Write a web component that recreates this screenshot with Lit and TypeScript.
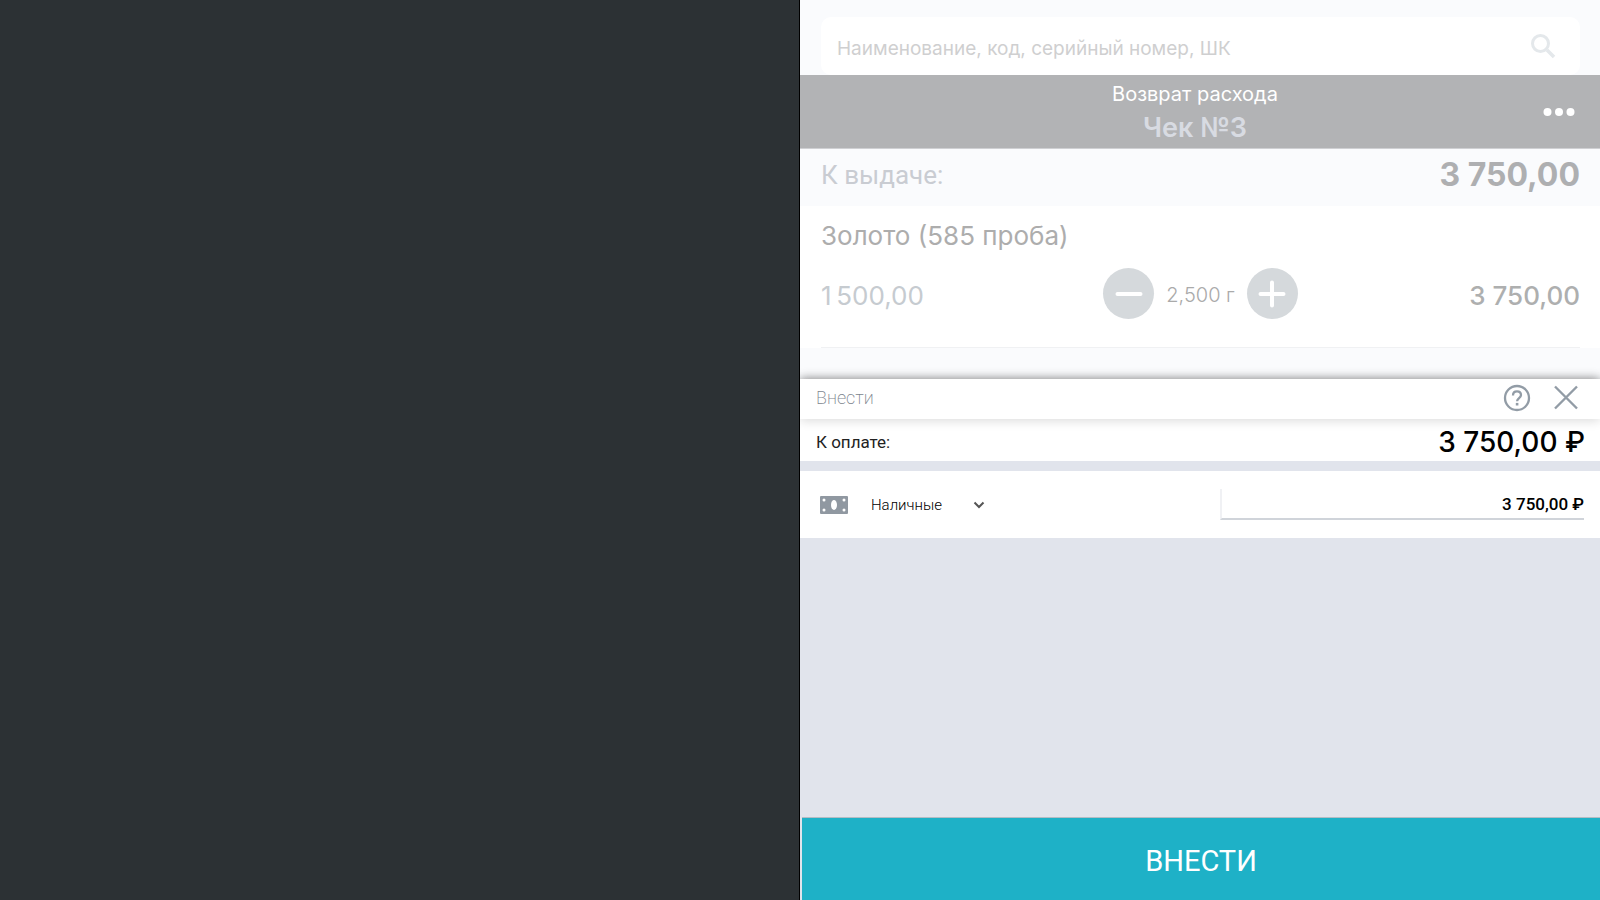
import { LitElement, html, css } from "lit";
import { customElement, state } from "lit/decorators.js";

@customElement("sale-receipt")
class SaleReceipt extends LitElement {
  static styles = css`
    :host { display: block; background: #fafbfd; font-family: Inter, "Liberation Sans", sans-serif; }
    * { box-sizing: border-box; }
    button { border: 0; padding: 0; background: none; font: inherit; display: flex; align-items: center; justify-content: center; }
    svg { display: block; }
    .search { padding: 17px 20px 0 21px; }
    .field { display: flex; align-items: center; height: 58px; padding: 0 16px; border-radius: 10px; background: #fff; }
    .field input { flex: 1; min-width: 0; border: 0; padding: 6px 0 0; outline: 0; background: none; font: 19px/28px Inter, sans-serif; }
    .field input::placeholder { color: #cfcfd0; opacity: 1; }
    .find { width: 42px; height: 44px; }
    .head { display: grid; grid-template-columns: 50px 1fr 50px; align-items: center; padding: 0 16px 0 10px; background: #b2b3b5; border-bottom: 1px solid #cfd0d3; height: 74px; }
    .titles { padding-right: 4px; text-align: center; }
    .kind { margin: 0; color: #fff; font-size: 20px; line-height: 32px; font-weight: 400; }
    .number { margin: 0; color: #d8dbe2; font-size: 27px; line-height: 36px; font-weight: 600; }
    .total { display: flex; justify-content: space-between; align-items: center; height: 57px; padding: 0 20px 6px 21px; }
    .total .label { color: #c9ccd2; font: 26px/36px Roboto, sans-serif; }
    .total .sum { color: #aeafb1; font-size: 32px; line-height: 40px; font-weight: 700; }
    .item { padding: 12px 20px 0 21px; background: #fff; }
    .name { margin: 0; color: #adadad; font-size: 26px; line-height: 36px; font-weight: 400; }
    .line { display: grid; grid-template-columns: 1fr auto 1fr; align-items: center; padding: 14px 0 28px; border-bottom: 1px solid #f0f1f3; }
    .price, .cost { padding-top: 4px; font-size: 26px; line-height: 36px; }
    .price { color: #c6cbd0; font-weight: 400; }
    .cost { color: #aeafaf; font-weight: 500; text-align: right; }
    .stepper { display: flex; align-items: center; gap: 12px; color: #aaa; font-size: 20px; line-height: 28px; font-weight: 300; }
    .stepper span { padding-top: 2px; }
    .step { width: 51px; height: 51px; border-radius: 50%; background: #d5d9dc; }
  `;
  render() {
    return html`
      <div class="search">
        <div class="field">
          <input type="text" aria-label="Поиск товара" placeholder="Наименование, код, серийный номер, ШК" />
          <button class="find" aria-label="Найти">
            <svg width="26" height="26" viewBox="0 0 26 26" fill="none" stroke="#e4e8eb"><circle cx="10.5" cy="10.5" r="8" stroke-width="3" /><path d="M17 17l7 7" stroke-width="3.6" /></svg>
          </button>
        </div>
      </div>
      <header class="head">
        <span></span>
        <div class="titles"><p class="kind">Возврат расхода</p><h1 class="number">Чек №3</h1></div>
        <button aria-label="Ещё"><svg width="32" height="8" viewBox="0 0 32 8" fill="#fff"><circle cx="4.5" cy="4" r="4" /><circle cx="16" cy="4" r="4" /><circle cx="27.500" cy="4" r="4" /></svg></button>
      </header>
      <div class="total"><span class="label">К выдаче:</span><span class="sum">3 750,00</span></div>
      <article class="item">
        <h2 class="name">Золото (585 проба)</h2>
        <div class="line">
          <span class="price">1\u2009500,00</span>
          <div class="stepper">
            <button class="step" aria-label="Меньше"><svg width="28" height="28" viewBox="0 0 28 28" stroke="#fff" stroke-width="4" stroke-linecap="round"><path d="M2.5 14h23" /></svg></button>
            <span>2,500 г</span>
            <button class="step" aria-label="Больше"><svg width="28" height="28" viewBox="0 0 28 28" stroke="#fff" stroke-width="4" stroke-linecap="round"><path d="M2.5 14h23M14 2.5v23" /></svg></button>
          </div>
          <span class="cost">3 750,00</span>
        </div>
      </article>
    `;
  }
}

@customElement("payment-sheet")
class PaymentSheet extends LitElement {
  static styles = css`
    :host { display: flex; flex-direction: column; background: #e1e4ec; box-shadow: 0 0 10px rgba(0, 0, 0, 0.45); font-family: Roboto, "Liberation Sans", sans-serif; clip-path: inset(-12px 0 0 0); }
    * { box-sizing: border-box; }
    button { border: 0; padding: 0; background: none; font: inherit; }
    svg { display: block; }
    .bar { position: relative; display: flex; align-items: center; height: 40px; padding: 0 20px 2px 16px; background: #fff; box-shadow: 0 2px 10px rgba(0, 0, 0, 0.14); }
    .title { flex: 1; margin: 0; color: #7c848d; font-size: 18px; line-height: 24px; font-weight: 200; }
    .actions { display: flex; align-items: center; gap: 21px; }
    .due { display: flex; align-items: center; justify-content: space-between; height: 42px; padding: 4px 15px 0 16px; background: #fff; color: #000; }
    .due .label { color: #222; font-size: 17px; line-height: 24px; }
    .due .sum { font: 500 28px/36px Inter, sans-serif; }
    .method { display: flex; align-items: center; height: 67px; margin-top: 10px; padding: 0 16px 0 20px; background: #fff; }
    .kind { position: relative; display: flex; align-items: center; margin-left: 23px; }
    .kind select { appearance: none; width: 114px; border: 0; padding: 0; background: none; color: #000; font: 300 15px/24px Roboto, sans-serif; outline: 0; }
    .kind svg { position: absolute; right: 0; pointer-events: none; }
    .amount { width: 364px; height: 31px; margin-left: auto; padding: 0 0 0 8px; border: 0; border-left: 2px solid #f0f1f4; border-bottom: 2px solid #d0d4da; background: #fff; color: #000; font: 500 17px/28px Roboto, sans-serif; text-align: right; outline: 0; }
    .pay { height: 83px; margin: auto 0 0 2px; padding-top: 4px; border-top: 1px solid #b4bcc4; background: #1eb1c7; color: #fff; font-size: 29px; line-height: 36px; font-weight: 450; }
  `;
  @state() amount = "3 750,00 ₽";
  render() {
    return html`
      <div class="bar">
        <h2 class="title">Внести</h2>
        <div class="actions">
          <button aria-label="Справка"><svg width="28" height="28" viewBox="0 0 28 28" fill="none" stroke="#929ca6" stroke-width="2.3"><circle cx="14" cy="14" r="12" /><path d="M10 11.4c0-2.5 1.7-4 4-4s4 1.500 4 3.700c0 3-3.900 3.200-3.900 6.200" /><path d="M14.100 18.900v2.600" stroke-width="2.600" /></svg></button>
          <button aria-label="Закрыть"><svg width="28" height="28" viewBox="0 0 28 28" fill="none" stroke="#929ca6" stroke-width="2.400"><path d="M3 2.500l22 22M25 2.500l-22 22" /></svg></button>
        </div>
      </div>
      <div class="due"><span class="label">К оплате:</span><span class="sum">3 750,00 ₽</span></div>
      <div class="method">
        <svg width="28" height="18" viewBox="0 0 28 18"><rect width="28" height="18" rx="1" fill="#9098a1" /><g fill="#fff"><ellipse cx="14" cy="9" rx="3" ry="5" /><circle cx="4" cy="4" r="1.500" /><circle cx="24" cy="4" r="1.500" /><circle cx="4" cy="14" r="1.500" /><circle cx="24" cy="14" r="1.500" /></g></svg>
        <div class="kind">
          <select aria-label="Способ оплаты"><option>Наличные</option></select>
          <svg width="12" height="8" viewBox="0 0 12 8" fill="none" stroke="#555" stroke-width="2"><path d="M1.500 1.500l4.500 4.500 4.500-4.500" /></svg>
        </div>
        <input class="amount" type="text" aria-label="Сумма" .value=${this.amount} />
      </div>
      <button class="pay">ВНЕСТИ</button>
    `;
  }
}

@customElement("app-root")
class AppRoot extends LitElement {
  static styles = css`
    :host { display: grid; grid-template-columns: 1fr 1fr; min-height: 100vh; background: #2c3134; }
    .shade { border-right: 1px solid #000; }
    .register { display: flex; flex-direction: column; background: #fafbfd; }
    .sheet { flex: 1; margin-top: 31px; }
  `;
  render() {
    return html`
      <div class="shade"></div>
      <main class="register">
        <sale-receipt></sale-receipt>
        <payment-sheet class="sheet"></payment-sheet>
      </main>
    `;
  }
}
